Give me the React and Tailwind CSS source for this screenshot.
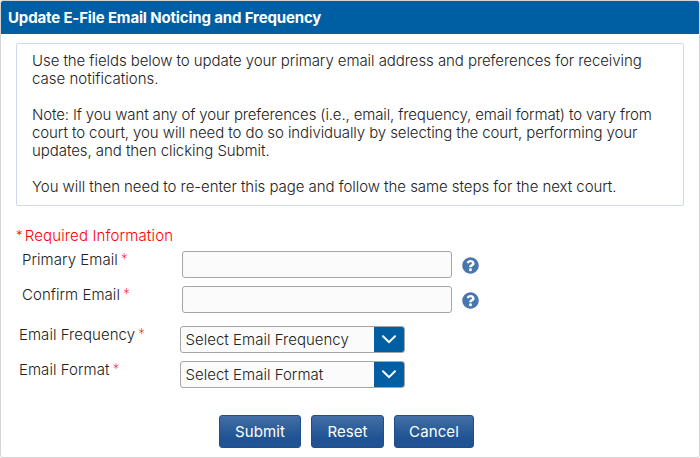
import { FaQuestionCircle } from 'react-icons/fa';

function Label({ htmlFor, children, className }) {
  return (
    <label htmlFor={htmlFor} className={`block leading-[18px] tracking-[0.04px] whitespace-nowrap ${className}`}>
      {children}
      <span className="ml-[3px] align-[1px] text-[14px] leading-none font-extralight text-[#ff0000]">*</span>
    </label>
  );
}

function EmailField({ id, label }) {
  return (
    <div className="flex h-[35px] items-start">
      <Label htmlFor={id} className="w-[160px] shrink-0">
        {label}
      </Label>
      <input
        id={id}
        type="email"
        className="h-[27px] w-[270px] rounded-[3px] border border-[#a6a6a6] bg-[#fbfbfb] px-1.5 outline-none"
      />
      <button type="button" aria-label={`${label} help`} className="mt-[6px] ml-[10px]">
        <FaQuestionCircle className="size-[17px] text-[#4876ae]" />
      </button>
    </div>
  );
}

function SelectField({ id, label, placeholder }) {
  return (
    <div className="flex h-[35px] items-start">
      <Label htmlFor={id} className="w-[161px] shrink-0">
        {label}
      </Label>
      <button
        id={id}
        type="button"
        className="flex h-[27px] w-[225px] overflow-hidden rounded-[3px] border border-[#a6a6a6] bg-[#fbfbfb] text-left"
      >
        <span className="flex-1 pl-[4.5px] leading-[26px] tracking-[0.02px] whitespace-nowrap">{placeholder}</span>
        <span className="flex h-full w-[30px] items-center justify-center bg-[#005ea2]">
          <svg viewBox="0 0 14 9" className="h-[9px] w-[14px]" fill="none" stroke="#fff" strokeWidth="2">
            <path d="M1 1.2 7 7.2 13 1.2" strokeLinecap="round" />
          </svg>
        </span>
      </button>
    </div>
  );
}

function ActionButton({ type = 'button', className, children }) {
  return (
    <button
      type={type}
      className={`h-[33px] rounded-[3px] border border-[#1f4f8a] bg-linear-to-b from-[#426fa5] to-[#1f5393] to-70% pt-px text-[15px] font-normal tracking-[0.1px] text-white ${className}`}
    >
      {children}
    </button>
  );
}

export default function App() {
  return (
    <div className="h-[458px] w-[700px] overflow-hidden rounded-[3px] border border-[#d4d4d4] bg-white font-['Inter',sans-serif] text-[15px] font-light tracking-[-0.1px] text-[#222222]">
      <h1 className="h-[33px] bg-[#005ea2] pl-[7px] text-[15px] leading-[33px] font-bold tracking-[-0.15px] text-white">
        Update E-File Email Noticing and Frequency
      </h1>

      <div className="mx-[15px] mt-[9px] h-[163px] rounded-[2px] border border-[#cddaeb] pt-[8px] pl-[15px] leading-[18px] whitespace-nowrap">
        <p className="tracking-[-0.07px]">
          Use the fields below to update your primary email address and preferences for receiving
          <br />
          <span className="tracking-[0.02px]">case notifications.</span>
        </p>
        <p className="mt-[18px] tracking-[-0.14px]">
          Note: If you want any of your preferences (i.e., email, frequency, email format) to vary from
          <br />
          <span className="tracking-[-0.09px]">
            court to court, you will need to do so individually by selecting the court, performing your
          </span>
          <br />
          <span className="tracking-[-0.06px]">updates, and then clicking Submit.</span>
        </p>
        <p className="mt-[18px] tracking-[-0.05px]">
          You will then need to re-enter this page and follow the same steps for the next court.
        </p>
      </div>

      <form onSubmit={(e) => e.preventDefault()}>
        <p className="mt-[21px] ml-[15px] leading-[18px] tracking-[0.15px] text-[#ff0000]">
          <span className="mr-[2px] align-[1px] text-[13px] leading-none">*</span>
          Required Information
        </p>

        <div className="mt-[6px] ml-[21px]">
          <EmailField id="primaryEmail" label="Primary Email" />
          <EmailField id="confirmEmail" label="Confirm Email" />
        </div>

        <div className="mt-[5px] ml-[18px]">
          <SelectField id="frequency" label="Email Frequency" placeholder="Select Email Frequency" />
          <SelectField id="format" label="Email Format" placeholder="Select Email Format" />
        </div>

        <div className="mt-[19px] ml-[218px] flex gap-[10px]">
          <ActionButton type="submit" className="w-[82px]">
            Submit
          </ActionButton>
          <ActionButton className="w-[73px]">Reset</ActionButton>
          <ActionButton className="w-[80px]">Cancel</ActionButton>
        </div>
      </form>
    </div>
  );
}
